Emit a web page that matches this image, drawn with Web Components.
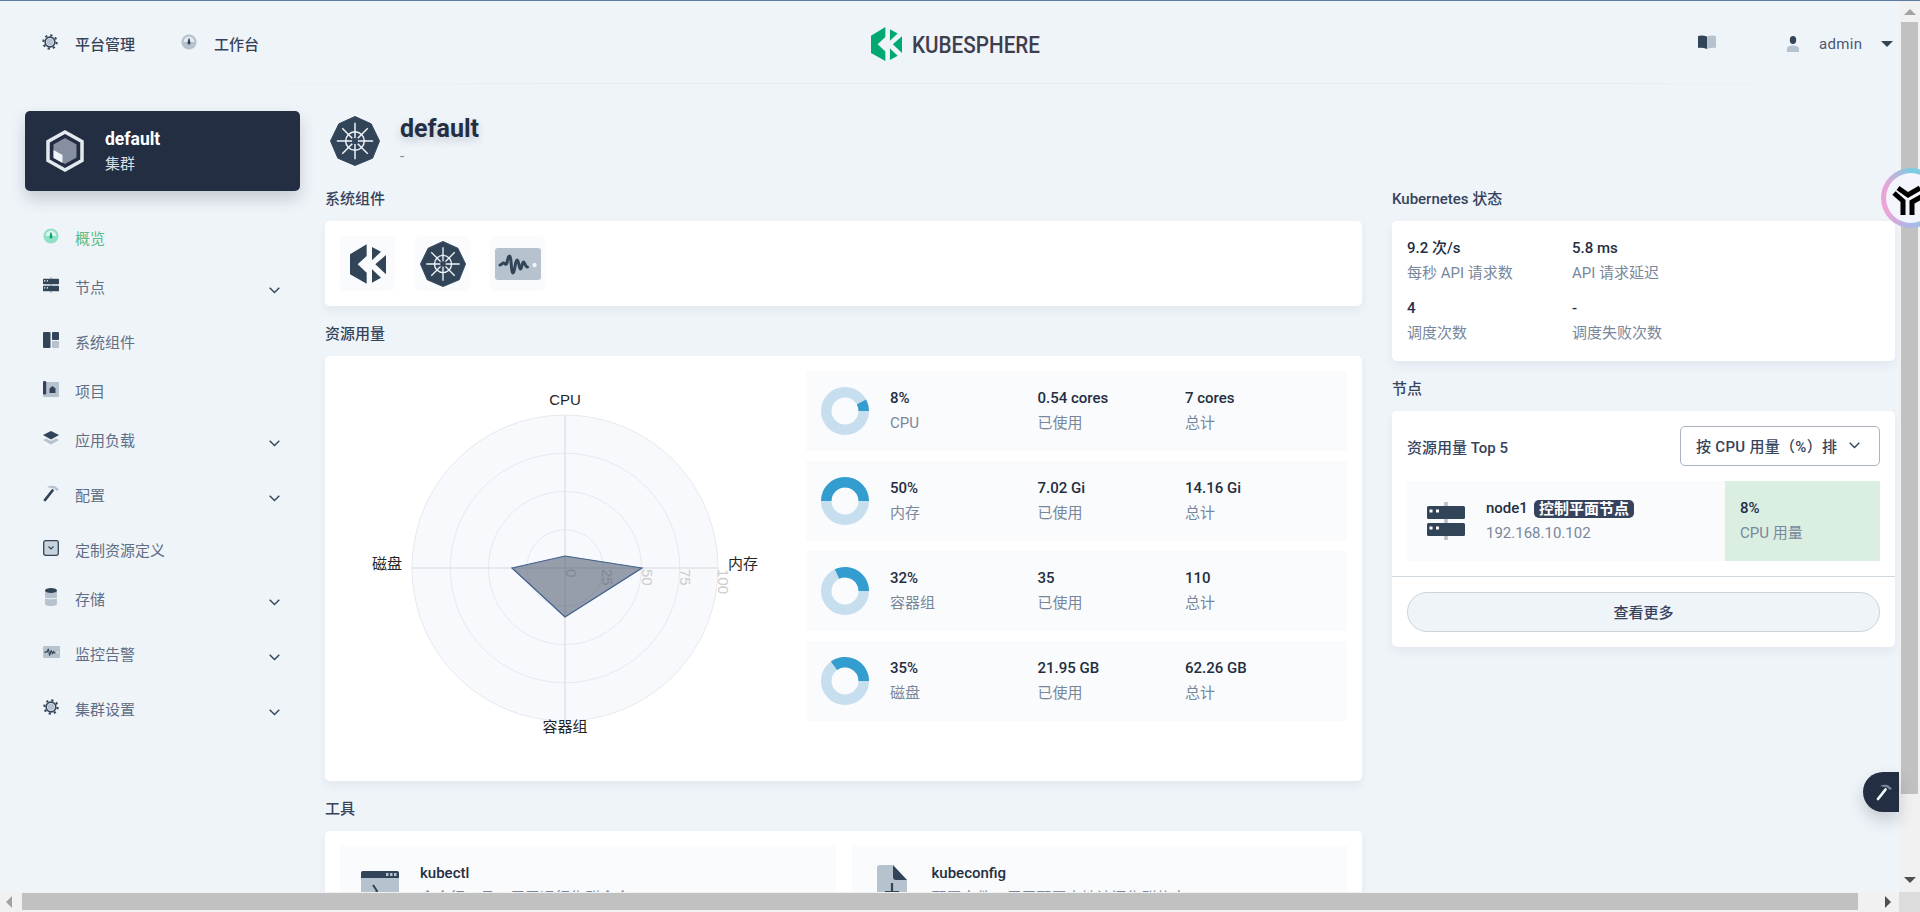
<!DOCTYPE html>
<html lang="zh">
<head>
<meta charset="utf-8">
<title>KubeSphere</title>
<style>
  html, body { margin: 0; height: 100%; overflow: hidden; background: #eff4f9; }
  body { font-family: Roboto, "Noto Sans CJK SC", sans-serif; font-size: 15px; color: #242e42; }
</style>
</head>
<body>
<ks-app>
  <ks-header slot="header"></ks-header>

  <ks-sidebar slot="sidebar">
    <ks-cluster-card name="default" kind="集群"></ks-cluster-card>
    <ks-nav-item icon="gaugeActive" active>概览</ks-nav-item>
    <ks-nav-item icon="nodes" expand>节点</ks-nav-item>
    <ks-nav-item icon="components">系统组件</ks-nav-item>
    <ks-nav-item icon="project">项目</ks-nav-item>
    <ks-nav-item icon="stack" expand>应用负载</ks-nav-item>
    <ks-nav-item icon="hammer" expand>配置</ks-nav-item>
    <ks-nav-item icon="crd">定制资源定义</ks-nav-item>
    <ks-nav-item icon="database" expand>存储</ks-nav-item>
    <ks-nav-item icon="monitor" expand>监控告警</ks-nav-item>
    <ks-nav-item icon="gear" expand>集群设置</ks-nav-item>
  </ks-sidebar>

  <ks-overview slot="main">
    <ks-page-title name="default" desc="-"></ks-page-title>
    <ks-columns>
      <div slot="left">
        <ks-section heading="系统组件">
          <ks-component-list></ks-component-list>
        </ks-section>
        <ks-section heading="资源用量">
          <ks-usage>
            <ks-resource-row percent="8" label="CPU" used="0.54 cores" total="7 cores"></ks-resource-row>
            <ks-resource-row percent="50" label="内存" used="7.02 Gi" total="14.16 Gi"></ks-resource-row>
            <ks-resource-row percent="32" label="容器组" used="35" total="110"></ks-resource-row>
            <ks-resource-row percent="35" label="磁盘" used="21.95 GB" total="62.26 GB"></ks-resource-row>
          </ks-usage>
        </ks-section>
        <ks-section heading="工具">
          <ks-tools>
            <ks-tool-item icon="terminal" name="kubectl" desc="命令行工具，用于运行集群命令"></ks-tool-item>
            <ks-tool-item icon="file" name="kubeconfig" desc="配置文件，用于配置本地访问集群信息"></ks-tool-item>
          </ks-tools>
        </ks-section>
      </div>
      <div slot="right">
        <ks-section heading="Kubernetes 状态">
          <ks-status></ks-status>
        </ks-section>
        <ks-section heading="节点">
          <ks-node-card></ks-node-card>
        </ks-section>
      </div>
    </ks-columns>
  </ks-overview>
</ks-app>

<script>
const DARK = '#324558';
const PALE = '#b6c2cd';

const wheel = `
  <path d="M50 0 83 15 100 50 86 85 50 100 15 85 0 50 17 15Z" fill="${DARK}" stroke="${DARK}" stroke-width="2" stroke-linejoin="round"/>
  <g stroke="#eff4f9" stroke-width="3" fill="none">
    <path d="M50 13V87M13 50H87M24 24 76 76M76 24 24 76"/>
    <circle cx="50" cy="50" r="19"/>
  </g>
  <rect x="44" y="44" width="12" height="12" fill="${DARK}"/>`;

const logoShape = `
  <path d="M50 0 0 30V90L50 118V85L23 60 50 35Z"/>
  <path d="M66 8 93 22 66 48Z"/>
  <path d="M108 32 76 60 108 90Z"/>
  <path d="M66 75 93 100 66 115Z"/>`;

const hammer = (handle, head) => `<svg viewBox="0 0 16 16"><path d="M9.500 5.500 2 15" stroke="${handle}" stroke-width="2.800" stroke-linecap="round"/><path d="M4 2C7 .5 11 .5 12.500 1.500L16 4.500 14 6 11 3.500C9 3 6 2.500 4 2Z" fill="${head}"/></svg>`;

const ICONS = {
  gear: `<svg viewBox="0 0 16 16"><circle cx="8" cy="8" r="6.7" fill="none" stroke="${DARK}" stroke-width="2" stroke-dasharray="2.3 2.96"/><circle cx="8" cy="8" r="4.8" fill="none" stroke="${DARK}" stroke-width="1.7"/><circle cx="8" cy="8" r="3.4" fill="${PALE}"/></svg>`,
  gauge: `<svg viewBox="0 0 16 16"><circle cx="8" cy="8" r="7.6" fill="${PALE}"/><path d="M2.6 8a5.4 5.4 0 0 1 10.8 0Z" fill="#e4ebf1"/><path d="M7.4 4.5h1.2l.9 4.6a1.5 1.5 0 1 1-3 0Z" fill="${DARK}"/></svg>`,
  gaugeActive: `<svg viewBox="0 0 16 16"><circle cx="8" cy="8" r="7.6" fill="#90e0c5"/><path d="M2.6 8a5.4 5.4 0 0 1 10.8 0Z" fill="#dff5ec"/><path d="M7.4 4.5h1.2l.9 4.6a1.5 1.5 0 1 1-3 0Z" fill="#00aa72"/></svg>`,
  nodes: `<svg viewBox="0 0 38 38"><rect x="17.2" y="0" width="3.6" height="38" fill="${PALE}"/><rect y="4" width="38" height="13" rx="1.5" fill="${DARK}"/><rect y="21" width="38" height="13" rx="1.5" fill="${DARK}"/><path d="M2.500 7.500h3v3h-3zM9 7.500h3v3H9zM2.500 24.500h3v3h-3zM9 24.500h3v3H9z" fill="#fff"/></svg>`,
  components: `<svg viewBox="0 0 16 16"><rect width="7.500" height="16" rx="1" fill="${DARK}"/><rect x="9" width="7" height="8" rx="1" fill="${DARK}"/><rect x="9" y="9" width="7" height="7" rx="1" fill="${PALE}"/></svg>`,
  project: `<svg viewBox="0 0 16 16"><rect y="1" width="16" height="15" rx="1" fill="${PALE}"/><rect width="3.200" height="13.500" rx="1.2" fill="${DARK}"/><path d="M6.500 12V7.500L9.500 5l3 2.500V12Z" fill="${DARK}"/></svg>`,
  stack: `<svg viewBox="0 0 16 14"><path d="M0 9 3 7.500 8 10 13 7.500 16 9 8 13.500Z" fill="${PALE}"/><path d="M8 0 16 4 8 8.500 0 4Z" fill="${DARK}"/></svg>`,
  hammer: hammer(DARK, PALE),
  hammerLight: hammer('#eff4f9', '#79879c'),
  crd: `<svg viewBox="0 0 16 16"><rect x=".7" y=".7" width="14.600" height="14.600" rx="1.800" fill="#c9d3dc" stroke="${DARK}" stroke-width="1.300"/><path d="M5.500 6.500 8 9l2.500-2.500" fill="none" stroke="${DARK}" stroke-width="1.200"/></svg>`,
  database: `<svg viewBox="0 0 12 18"><rect y="2" width="12" height="14" rx="1" fill="${PALE}"/><ellipse cx="6" cy="16" rx="6" ry="2" fill="${PALE}"/><path d="M0 10C2 11 10 11 12 10" fill="none" stroke="#eff4f9"/><ellipse cx="6" cy="2.500" rx="6" ry="2.500" fill="${DARK}"/></svg>`,
  monitor: `<svg viewBox="0 0 46 32"><rect width="46" height="32" rx="3" fill="${PALE}"/><path d="M5 17c1.500 0 2-2 3.500-2s2 2 3 1 1-8 3-8 1.500 17 3.500 17 2-13 4-13 2 9 3.500 9 1.500-7 3-7 1.500 5 4 5" fill="none" stroke="${DARK}" stroke-width="3" stroke-linecap="round" stroke-linejoin="round"/><circle cx="39.500" cy="17" r="2.200" fill="#eff4f9"/></svg>`,
  book: `<svg viewBox="0 0 18 14"><path d="M0 1C3 0 6 .5 9 1.500V14C6 13 3 12.500 0 13Z" fill="${DARK}"/><path d="M18 1C15 0 12 .5 9 1.500V14C12 13 15 12.500 18 13Z" fill="${PALE}"/></svg>`,
  user: `<svg viewBox="0 0 12 16"><ellipse cx="6" cy="4" rx="3.200" ry="4" fill="${DARK}"/><path d="M0 16V12.500C0 10.500 3 9.500 6 9.500S12 10.500 12 12.500V16Z" fill="${PALE}"/></svg>`,
  caret: `<svg viewBox="0 0 12 6"><path d="M0 0H12L6 6Z" fill="${DARK}"/></svg>`,
  chevron: `<svg viewBox="0 0 11 7"><path d="M.7 .8 5.500 5.500 10.300 .8" fill="none" stroke="${DARK}" stroke-width="1.400"/></svg>`,
  helm: `<svg viewBox="-1 -1 102 102">${wheel}</svg>`,
  logoDark: `<svg viewBox="0 0 108 118" fill="${DARK}">${logoShape}</svg>`,
  logoGreen: `<svg viewBox="0 0 108 118" fill="#00a971">${logoShape}</svg>`,
  cube: `<svg viewBox="0 0 38 42"><path d="M19 2 36 11.500V30.500L19 40 2 30.500V11.500Z" fill="#242e42" stroke="#e3e9ef" stroke-width="3.500"/><path d="M19 8 30.500 14.500V27.500L19 34 7.500 27.500V14.500Z" fill="#8690a0"/><path d="M7.500 20 16.500 25V33L7.500 28Z" fill="#eff4f9"/></svg>`,
  terminal: `<svg viewBox="0 0 38 42"><rect width="38" height="42" rx="2" fill="${PALE}"/><path d="M0 2a2 2 0 0 1 2-2H36a2 2 0 0 1 2 2V7H0Z" fill="${DARK}"/><path d="M25 2h2.500v3H25zM29 2h2.500v3H29zM33 2h2.500v3H33z" fill="${PALE}"/><path d="M12 14 16 20 12 26" fill="none" stroke="${DARK}" stroke-width="2"/></svg>`,
  file: `<svg viewBox="0 0 30 42"><path d="M3 0H15L30 15V42H0V3A3 3 0 0 1 3 0Z" fill="${PALE}"/><path d="M16 0 30 15H19A3 3 0 0 1 16 12Z" fill="${DARK}"/><path d="M15 18V27M8 27H22" stroke="${DARK}" stroke-width="2.200" fill="none"/></svg>`
};

class KsElement extends HTMLElement {
  constructor() {
    super();
    this._shadowRoot = this.attachShadow({ mode: 'open' });
  }

  connectedCallback() {
    this._shadowRoot.innerHTML = this.render();
  }

  attr(name) {
    return this.getAttribute(name) || '';
  }
}

class KsIcon extends KsElement {
  render() {
    const w = this.attr('w') || 16;
    const h = this.attr('h') || w;
    return `
      <style>
        :host { display: inline-flex; width: ${w}px; height: ${h}px; flex: none; }
        svg { width: 100%; height: 100%; display: block; overflow: visible; }
      </style>
      ${ICONS[this.attr('name')]}`;
  }
}

class KsApp extends KsElement {
  render() {
    return `
      <style>
        :host { display: grid; position: relative; width: 1920px; height: 912px; overflow: hidden;
          grid-template-columns: 1899px 21px; grid-template-rows: 1px 891px 20px; background: #eff4f9; }
        .topline { grid-column: 1 / 3; background: #5b7ba5; }
        .view { overflow: hidden; min-width: 0; min-height: 0; }
        .shell { display: flex; }
        .corner { background: #dcdcdc; }
        .orb { position: absolute; left: 1881px; top: 168px; width: 60px; height: 60px; box-sizing: border-box;
          border-radius: 50%; padding: 5px; background: conic-gradient(from 300deg, #e7a6d8 0deg, #7ccbe2 60deg, #86cde4 170deg, #a9b9e6 240deg, #eba4d6 300deg, #e7a6d8 360deg); }
        .orb i { display: block; width: 100%; height: 100%; border-radius: 50%; background: #f2f5fb; }
        .orb svg { position: absolute; left: 8px; top: 14px; }
        .tool { position: absolute; left: 1863px; top: 772px; width: 36px; height: 40px; display: flex; align-items: center;
          padding-left: 13px; box-sizing: border-box; background: #242e42; border-radius: 20px 0 0 20px;
          box-shadow: 0 8px 16px 0 rgba(36,46,66,.2); }
      </style>
      <div class="topline"></div>
      <div class="view">
        <slot name="header"></slot>
        <div class="shell">
          <slot name="sidebar"></slot>
          <slot name="main"></slot>
        </div>
      </div>
      <ks-scrollbar dir="v"></ks-scrollbar>
      <ks-scrollbar dir="h"></ks-scrollbar>
      <div class="corner"></div>
      <div class="orb"><i></i>
        <svg width="50" height="40" viewBox="0 0 50 40" fill="none" stroke="#000" stroke-width="5">
          <path d="M9 6 19 13 31 6"/>
          <path d="M5 11 14 19V33M23 33V20L32 15"/>
        </svg>
      </div>
      <div class="tool"><ks-icon name="hammerLight" w="16"></ks-icon></div>`;
  }
}

class KsScrollbar extends KsElement {
  render() {
    const vertical = this.attr('dir') === 'v';
    return vertical ? `
      <style>
        :host { display: flex; flex-direction: column; align-items: center; background: #f1f1f1; height: 891px; }
        .up { width: 0; height: 0; border: 6px solid transparent; border-top: 0; border-bottom: 6px solid #a3a3a3; margin: 8px 0 7px; }
        .thumb { width: 17px; height: 772px; background: #c1c1c1; }
        .down { width: 0; height: 0; border: 6px solid transparent; border-bottom: 0; border-top: 6px solid #505050; margin-top: 83px; }
      </style>
      <i class="up"></i><i class="thumb"></i><i class="down"></i>` : `
      <style>
        :host { display: flex; align-items: center; background: #f1f1f1; }
        .left { width: 0; height: 0; border: 6px solid transparent; border-left: 0; border-right: 6px solid #a3a3a3; margin: 0 10px 0 6px; }
        .thumb { width: 1836px; height: 17px; margin-top: -1px; background: #c1c1c1; }
        .right { width: 0; height: 0; border: 6px solid transparent; border-right: 0; border-left: 6px solid #505050; margin-left: 27px; }
      </style>
      <i class="left"></i><i class="thumb"></i><i class="right"></i>`;
  }
}

class KsHeader extends KsElement {
  render() {
    return `
      <style>
        :host { display: flex; align-items: center; height: 83px; box-sizing: border-box; padding: 3px 0 0 42px; white-space: nowrap;
          border-bottom: 1px solid; border-image: linear-gradient(90deg, #eff4f9 0, #e6ebf1 40%, #e6ebf1 80%, #eff4f9 100%) 1; color: #36435c; }
        a { display: flex; align-items: center; font-weight: 500; flex: none; }
        a ks-icon { margin: -4px 17px 0 0; }
        .work { margin-left: 46px; }
        .logo { margin-left: 612px; display: flex; align-items: center; width: 827px; flex: none; }
        .logo svg.word { margin-left: 10px; display: block; }
        .book { margin-top: -3px; }
        .user { margin-left: 71px; }
        .name { margin-left: 20px; color: #4a5974; font-size: 15px; letter-spacing: .3px; }
        .caret { margin-left: 19px; }
      </style>
      <a><ks-icon name="gear" w="16"></ks-icon>平台管理</a>
      <a class="work"><ks-icon name="gauge" w="16"></ks-icon>工作台</a>
      <div class="logo">
        <ks-icon name="logoGreen" w="31" h="34"></ks-icon>
        <svg class="word" width="170" height="24" viewBox="0 0 170 24"><text x="0" y="20.500" font-family="Roboto, sans-serif" font-size="24" font-weight="500" fill="#3e3e4f" textLength="128" lengthAdjust="spacingAndGlyphs">KUBESPHERE</text></svg>
      </div>
      <ks-icon class="book" name="book" w="18" h="14"></ks-icon>
      <ks-icon class="user" name="user" w="12" h="16"></ks-icon>
      <span class="name">admin</span>
      <ks-icon class="caret" name="caret" w="12" h="6"></ks-icon>`;
  }
}

class KsSidebar extends KsElement {
  render() {
    return `
      <style>
        :host { display: block; width: 325px; flex: none; box-sizing: border-box; padding: 27px 25px 0; }
      </style>
      <slot></slot>`;
  }
}

class KsClusterCard extends KsElement {
  render() {
    return `
      <style>
        :host { display: flex; align-items: center; height: 80px; margin-bottom: 22px; box-sizing: border-box; padding-left: 21px; background: #242e42;
          border-radius: 5px; color: #fff; box-shadow: 0 8px 16px 0 rgba(36,46,66,.2); }
        .t { margin: 2px 0 0 21px; }
        b { display: block; font-size: 17.500px; line-height: 25px; font-weight: 700; }
        span { display: block; font-size: 15px; line-height: 25px; color: #d5dee7; }
      </style>
      <ks-icon name="cube" w="38" h="42"></ks-icon>
      <div class="t"><b>${this.attr('name')}</b><span>${this.attr('kind')}</span></div>`;
  }
}

const NAV_SIZES = {
  gear: [16, 16], gaugeActive: [16, 16], nodes: [16, 16], components: [16, 16], project: [16, 16],
  stack: [16, 14], hammer: [16, 16], crd: [16, 16], database: [12, 18], monitor: [17, 12]
};

class KsNavItem extends KsElement {
  render() {
    const name = this.attr('icon');
    const [w, h] = NAV_SIZES[name];
    const expand = this.hasAttribute('expand');
    const active = this.hasAttribute('active');
    return `
      <style>
        :host { display: flex; align-items: center; height: 49px; margin-bottom: ${expand ? 6 : 0}px; color: ${active ? '#55bc8a' : '#5f6e85'}; }
        .ic { width: 18px; display: flex; justify-content: center; margin: -3px 0 0 17px; }
        .label { margin-left: 15px; flex: 1; }
        ks-icon.chev { margin: 7px 20px 0 0; }
      </style>
      <span class="ic"><ks-icon name="${name}" w="${w}" h="${h}"></ks-icon></span>
      <span class="label"><slot></slot></span>
      ${expand ? '<ks-icon class="chev" name="chevron" w="11" h="7"></ks-icon>' : ''}`;
  }
}

class KsOverview extends KsElement {
  render() {
    return `
      <style>
        :host { display: block; width: 1570px; flex: none; padding-top: 32px; }
      </style>
      <slot></slot>`;
  }
}

class KsPageTitle extends KsElement {
  render() {
    return `
      <style>
        :host { display: flex; height: 50px; margin-bottom: 5px; }
        .t { margin-left: 20px; margin-top: -3px; }
        h1 { margin: 0; font-size: 25px; line-height: 32px; font-weight: 700; color: #242e42; text-shadow: 0 4px 8px rgba(36,46,66,.2); }
        p { margin: 1px 0 0; font-size: 15px; line-height: 20px; color: #79879c; }
        ks-icon { margin-left: 5px; }
      </style>
      <ks-icon name="helm" w="50"></ks-icon>
      <div class="t"><h1>${this.attr('name')}</h1><p>${this.attr('desc')}</p></div>`;
  }
}

class KsColumns extends KsElement {
  render() {
    return `
      <style>
        :host { display: grid; grid-template-columns: 1037px 503px; column-gap: 30px; }
      </style>
      <slot name="left"></slot>
      <slot name="right"></slot>`;
  }
}

class KsSection extends KsElement {
  render() {
    return `
      <style>
        :host { display: block; padding-top: 16px; }
        h3 { margin: 0 0 12px; padding-top: 2px; font-size: 15px; line-height: 20px; font-weight: 500; color: #36435c; }
      </style>
      <h3>${this.attr('heading')}</h3>
      <slot></slot>`;
  }
}

const CARD = 'background: #fff; border-radius: 5px; box-shadow: 0 5px 10px 0 rgba(36,46,66,.06);';

class KsComponentList extends KsElement {
  render() {
    return `
      <style>
        :host { display: flex; gap: 20px; padding: 15px; height: 85px; box-sizing: border-box; ${CARD} }
        div { width: 55px; height: 55px; display: flex; align-items: center; justify-content: center; background: #f9fbfd; border-radius: 5px; }
      </style>
      <div><ks-icon name="logoDark" w="36" h="40"></ks-icon></div>
      <div><ks-icon name="helm" w="46"></ks-icon></div>
      <div><ks-icon name="monitor" w="46" h="32"></ks-icon></div>`;
  }
}

class KsUsage extends KsElement {
  render() {
    return `
      <style>
        :host { display: flex; height: 425px; box-sizing: border-box; padding: 15px 15px 0 0; ${CARD} }
        ks-radar { margin-top: -15px; }
        .rows { flex: 1; display: flex; flex-direction: column; gap: 10px; }
      </style>
      <ks-radar></ks-radar>
      <div class="rows"><slot></slot></div>`;
  }
}

class KsRadar extends KsElement {
  render() {
    const cx = 240;
    const cy = 212;
    const r = 153;
    const rings = [0.25, 0.5, 0.75].map(f =>
      `<circle cx="${cx}" cy="${cy}" r="${r * f}" fill="none" stroke="#e6eaef"/>`).join('');
    const ticks = [['0', 6], ['25', 42], ['50', 82], ['75', 120], ['100', 158]].map(([t, x]) =>
      `<text transform="translate(${cx + x - 5},${cy + 1}) rotate(90)" font-size="15" fill="#ccc">${t}</text>`).join('');
    const font = `font-family="'Liberation Sans','Noto Sans CJK SC',sans-serif"`;
    return `
      <style>
        :host { display: block; width: 481px; height: 425px; flex: none; }
        svg { display: block; }
      </style>
      <svg width="481" height="425" viewBox="0 0 481 425" ${font}>
        <circle cx="${cx}" cy="${cy}" r="${r}" fill="#f7f9fc" stroke="#e6eaef"/>
        ${rings}
        <path d="M${cx} ${cy - r}V${cy + r}M${cx - r} ${cy}H${cx + r}" stroke="#dfe3e8" stroke-width="1.500"/>
        <g>${ticks}</g>
        <path d="M${cx} ${cy - 12}L${cx + 77} ${cy}L${cx} ${cy + 49}L${cx - 53} ${cy}Z" fill="rgba(54,67,92,.5)" stroke="#3f5f8c" stroke-width="1.200"/>
        <g font-size="15" fill="#242424" text-anchor="middle">
          <text x="${cx}" y="49">CPU</text>
          <text x="${cx - 178}" y="213">磁盘</text>
          <text x="${cx + 178}" y="213">内存</text>
          <text x="${cx}" y="376">容器组</text>
        </g>
      </svg>`;
  }
}

class KsDonut extends KsElement {
  render() {
    const p = Number(this.attr('percent')) / 100;
    const R = 24;
    const r = 13.5;
    const end = p * Math.PI * 2;
    const ox = R + Math.cos(end) * R;
    const oy = R - Math.sin(end) * R;
    const ix = R + Math.cos(end) * r;
    const iy = R - Math.sin(end) * r;
    const large = p > 0.5 ? 1 : 0;
    const arc = `M${R + R} ${R}A${R} ${R} 0 ${large} 0 ${ox} ${oy}L${ix} ${iy}A${r} ${r} 0 ${large} 1 ${R + r} ${R}Z`;
    return `
      <style>
        :host { display: block; width: 48px; height: 48px; flex: none; }
        svg { display: block; }
      </style>
      <svg width="48" height="48" viewBox="0 0 48 48">
        <circle cx="24" cy="24" r="${(R + r) / 2}" fill="none" stroke="#c7deef" stroke-width="${R - r}"/>
        <path d="${arc}" fill="#329dce"/>
      </svg>`;
  }
}

class KsStat extends KsElement {
  render() {
    return `
      <style>
        :host { display: block; }
        b { display: block; line-height: 25px; font-weight: 500; color: #242e42; }
        span { display: block; line-height: 25px; color: #79879c; }
      </style>
      <b>${this.attr('value')}</b><span>${this.attr('label')}</span>`;
  }
}

class KsResourceRow extends KsElement {
  render() {
    return `
      <style>
        :host { display: flex; align-items: center; height: 80px; box-sizing: border-box; padding-left: 15px; background: #f9fbfd; }
        ks-donut { margin-right: 21px; }
        ks-stat { width: 147.500px; }
      </style>
      <ks-donut percent="${this.attr('percent')}"></ks-donut>
      <ks-stat value="${this.attr('percent')}%" label="${this.attr('label')}"></ks-stat>
      <ks-stat value="${this.attr('used')}" label="已使用"></ks-stat>
      <ks-stat value="${this.attr('total')}" label="总计"></ks-stat>`;
  }
}

class KsTools extends KsElement {
  render() {
    return `
      <style>
        :host { display: grid; grid-template-columns: 1fr 1fr; gap: 16px; padding: 15px; ${CARD} }
      </style>
      <slot></slot>`;
  }
}

class KsToolItem extends KsElement {
  render() {
    const file = this.attr('icon') === 'file';
    return `
      <style>
        :host { display: flex; height: 100px; box-sizing: border-box; padding: 15px 0 0 21px; background: #f9fbfd; }
        .ic { width: 38px; display: flex; justify-content: center; margin-top: ${file ? 4 : 10}px; }
        .t { margin-left: 21px; }
      </style>
      <span class="ic"><ks-icon name="${this.attr('icon')}" w="${file ? 30 : 38}" h="42"></ks-icon></span>
      <div class="t"><ks-stat value="${this.attr('name')}" label="${this.attr('desc')}"></ks-stat></div>`;
  }
}

class KsStatus extends KsElement {
  render() {
    return `
      <style>
        :host { display: grid; grid-template-columns: 165px 165px; grid-auto-rows: 50px; row-gap: 10px; height: 140px; box-sizing: border-box; padding: 15px 15px 0; ${CARD} }
      </style>
      <ks-stat value="9.2 次/s" label="每秒 API 请求数"></ks-stat>
      <ks-stat value="5.8 ms" label="API 请求延迟"></ks-stat>
      <ks-stat value="4" label="调度次数"></ks-stat>
      <ks-stat value="-" label="调度失败次数"></ks-stat>`;
  }
}

class KsNodeCard extends KsElement {
  render() {
    return `
      <style>
        :host { display: block; height: 236px; box-sizing: border-box; ${CARD} }
        .head { display: flex; align-items: center; justify-content: space-between; padding: 15px 15px 0; height: 40px; font-weight: 500; color: #36435c; }
        .select { display: flex; align-items: center; justify-content: space-between; width: 200px; height: 40px; box-sizing: border-box; padding: 0 19px 2px 15px; border: 1px solid #abb4be; border-radius: 5px; background: #fff; letter-spacing: .3px; white-space: nowrap; }
        .row { display: flex; margin: 15px 15px 0; height: 80px; background: #f9fbfd; }
        .node { flex: 1; display: flex; align-items: center; padding-left: 20px; }
        .used { width: 155px; box-sizing: border-box; padding: 15px 0 0 15px; background: #dbeee2; }
        hr { margin: 15px 0 0; border: 0; border-top: 1px solid #d1d7df; }
        button { display: block; width: 473px; height: 40px; margin: 15px 15px 0; padding: 0 0 2px; background: #eff4f9; border: 1px solid #ccd3db; border-radius: 20px; font: 500 15px Roboto, "Noto Sans CJK SC", sans-serif; color: #36435c; }
        .n { display: flex; flex-direction: column; margin-left: 21px; }
        .top { display: flex; align-items: center; line-height: 25px; font-weight: 500; }
        .badge { margin-left: 6px; height: 18px; line-height: 18px; padding: 0 5px; background: #36435c; color: #fff; border-radius: 5px; font-weight: 700; }
        .ip { line-height: 25px; color: #79879c; }
      </style>
      <div class="head"><span>资源用量 Top 5</span>
        <div class="select"><span>按 CPU 用量（%）排</span><ks-icon name="chevron" w="11" h="7"></ks-icon></div>
      </div>
      <div class="row">
        <div class="node">
          <ks-icon name="nodes" w="38"></ks-icon>
          <div class="n">
            <div class="top">node1<span class="badge">控制平面节点</span></div>
            <div class="ip">192.168.10.102</div>
          </div>
        </div>
        <div class="used"><ks-stat value="8%" label="CPU 用量"></ks-stat></div>
      </div>
      <hr>
      <button>查看更多</button>`;
  }
}

customElements.define('ks-icon', KsIcon);
customElements.define('ks-scrollbar', KsScrollbar);
customElements.define('ks-header', KsHeader);
customElements.define('ks-sidebar', KsSidebar);
customElements.define('ks-cluster-card', KsClusterCard);
customElements.define('ks-nav-item', KsNavItem);
customElements.define('ks-overview', KsOverview);
customElements.define('ks-page-title', KsPageTitle);
customElements.define('ks-columns', KsColumns);
customElements.define('ks-section', KsSection);
customElements.define('ks-component-list', KsComponentList);
customElements.define('ks-usage', KsUsage);
customElements.define('ks-radar', KsRadar);
customElements.define('ks-donut', KsDonut);
customElements.define('ks-stat', KsStat);
customElements.define('ks-resource-row', KsResourceRow);
customElements.define('ks-tools', KsTools);
customElements.define('ks-tool-item', KsToolItem);
customElements.define('ks-status', KsStatus);
customElements.define('ks-node-card', KsNodeCard);
customElements.define('ks-app', KsApp);
</script>
</body>
</html>
